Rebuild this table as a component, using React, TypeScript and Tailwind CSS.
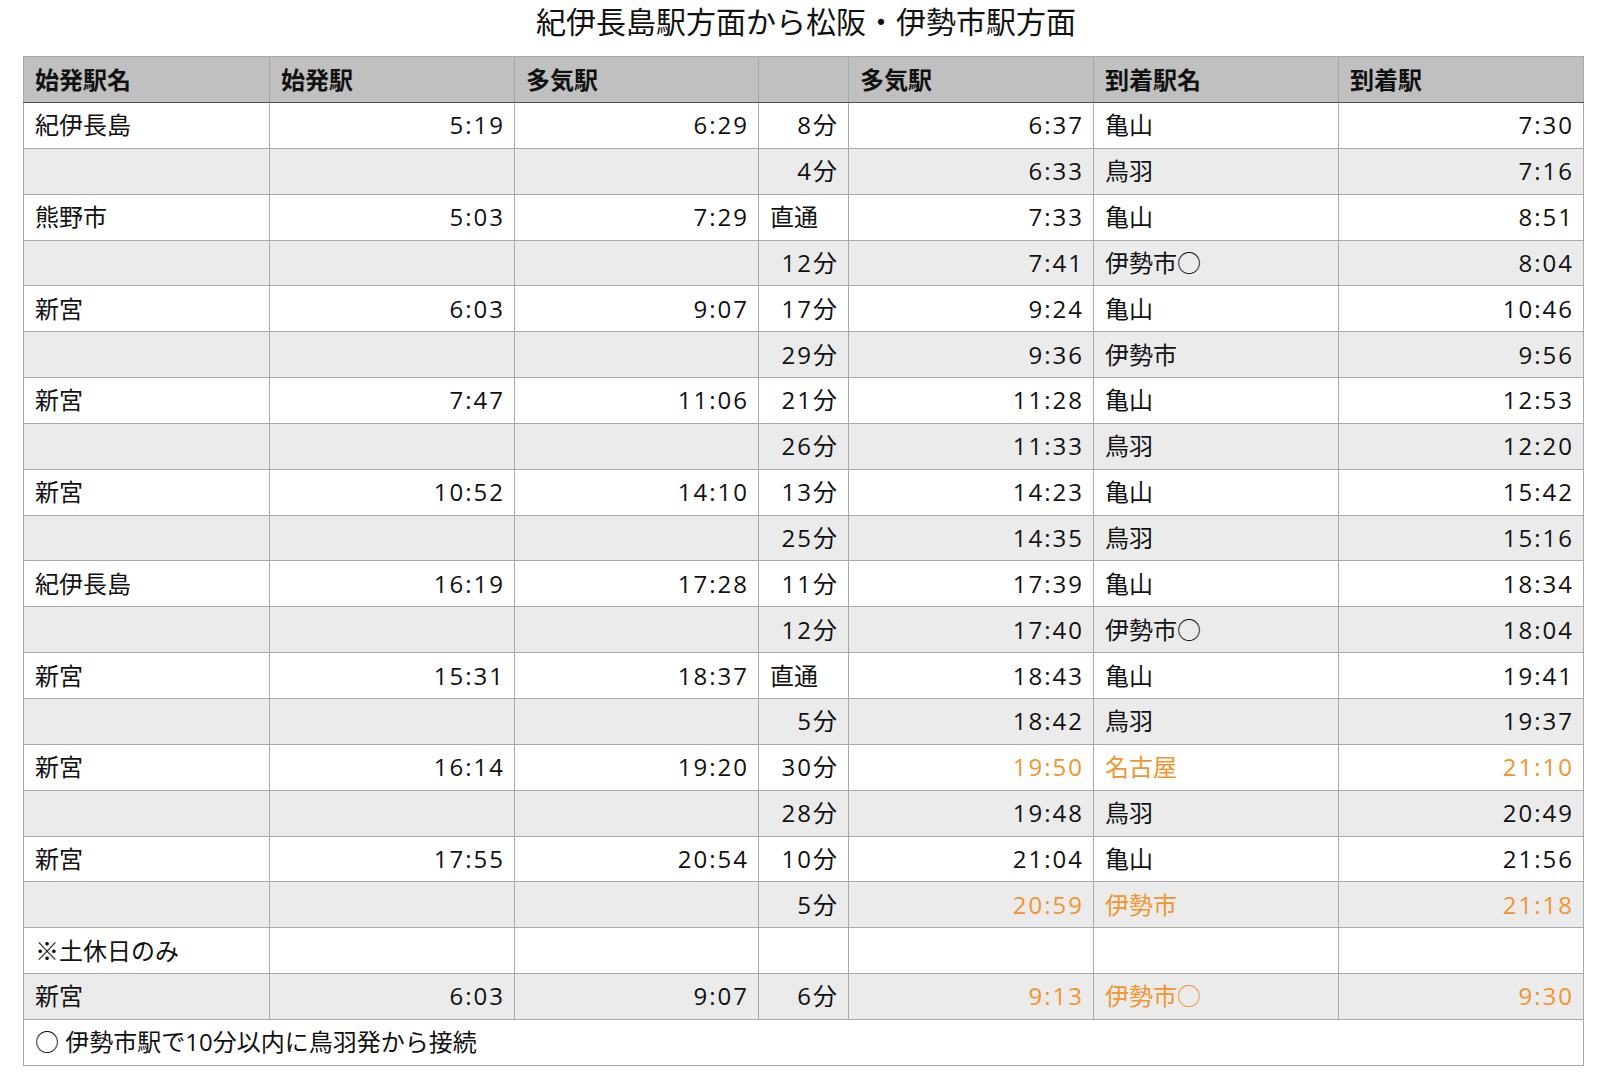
import React from 'react';

type Row = {
  from?: string;
  dep?: string;
  taki?: string;
  wait?: string;
  takiDep?: string;
  to?: string;
  arr?: string;
  orange?: boolean;
  leftWait?: boolean;
};

const rows: Row[] = [
  { from: '紀伊長島', dep: '5:19', taki: '6:29', wait: '8分', takiDep: '6:37', to: '亀山', arr: '7:30' },
  { wait: '4分', takiDep: '6:33', to: '鳥羽', arr: '7:16' },
  { from: '熊野市', dep: '5:03', taki: '7:29', wait: '直通', leftWait: true, takiDep: '7:33', to: '亀山', arr: '8:51' },
  { wait: '12分', takiDep: '7:41', to: '伊勢市○', arr: '8:04' },
  { from: '新宮', dep: '6:03', taki: '9:07', wait: '17分', takiDep: '9:24', to: '亀山', arr: '10:46' },
  { wait: '29分', takiDep: '9:36', to: '伊勢市', arr: '9:56' },
  { from: '新宮', dep: '7:47', taki: '11:06', wait: '21分', takiDep: '11:28', to: '亀山', arr: '12:53' },
  { wait: '26分', takiDep: '11:33', to: '鳥羽', arr: '12:20' },
  { from: '新宮', dep: '10:52', taki: '14:10', wait: '13分', takiDep: '14:23', to: '亀山', arr: '15:42' },
  { wait: '25分', takiDep: '14:35', to: '鳥羽', arr: '15:16' },
  { from: '紀伊長島', dep: '16:19', taki: '17:28', wait: '11分', takiDep: '17:39', to: '亀山', arr: '18:34' },
  { wait: '12分', takiDep: '17:40', to: '伊勢市○', arr: '18:04' },
  { from: '新宮', dep: '15:31', taki: '18:37', wait: '直通', leftWait: true, takiDep: '18:43', to: '亀山', arr: '19:41' },
  { wait: '5分', takiDep: '18:42', to: '鳥羽', arr: '19:37' },
  { from: '新宮', dep: '16:14', taki: '19:20', wait: '30分', takiDep: '19:50', to: '名古屋', arr: '21:10', orange: true },
  { wait: '28分', takiDep: '19:48', to: '鳥羽', arr: '20:49' },
  { from: '新宮', dep: '17:55', taki: '20:54', wait: '10分', takiDep: '21:04', to: '亀山', arr: '21:56' },
  { wait: '5分', takiDep: '20:59', to: '伊勢市', arr: '21:18', orange: true },
  { from: '※土休日のみ' },
  { from: '新宮', dep: '6:03', taki: '9:07', wait: '6分', takiDep: '9:13', to: '伊勢市○', arr: '9:30', orange: true },
];

const headers = ['始発駅名', '始発駅', '多気駅', '', '多気駅', '到着駅名', '到着駅'];

const cell = 'border border-[#a9a9a9] px-[11px] align-middle whitespace-nowrap';
// times are right aligned; the letter spacing widens the digits like the original font
const num = 'text-right tracking-[2px] pr-[9px]';

export default function App() {
  return (
    <div
      className="min-h-screen bg-white text-[#111] pb-4"
      style={{ fontFamily: '"Open Sans", "Noto Sans CJK JP", sans-serif' }}
    >
      <div className="h-[56px] text-center text-[30px] leading-[44px]">
        紀伊長島駅方面から松阪・伊勢市駅方面
      </div>
      <table className="ml-[23px] w-[1560px] table-fixed border-collapse text-[24px] leading-none">
        <colgroup>
          <col className="w-[246px]" />
          <col className="w-[245px]" />
          <col className="w-[244px]" />
          <col className="w-[90px]" />
          <col className="w-[245px]" />
          <col className="w-[245px]" />
          <col className="w-[245px]" />
        </colgroup>
        <thead>
          <tr className="h-[46px] bg-[#c0c0c0]">
            {headers.map((h, i) => (
              <th key={i} className={`${cell} border-b-[#505050] text-left font-bold`}>
                {h}
              </th>
            ))}
          </tr>
        </thead>
        <tbody>
          {rows.map((r, i) => {
            const bg = i % 2 === 1 ? 'bg-[#ebebeb]' : 'bg-white';
            const hl = r.orange ? 'text-[#f0952f]' : '';
            return (
              <tr key={i} className={`h-[45.85px] ${bg}`}>
                <td className={`${cell} text-left`}>{r.from}</td>
                <td className={`${cell} ${num}`}>{r.dep}</td>
                <td className={`${cell} ${num}`}>{r.taki}</td>
                <td className={`${cell} ${r.leftWait ? 'text-left' : num}`}>{r.wait}</td>
                <td className={`${cell} ${num} ${hl}`}>{r.takiDep}</td>
                <td className={`${cell} text-left ${hl}`}>{r.to}</td>
                <td className={`${cell} ${num} ${hl}`}>{r.arr}</td>
              </tr>
            );
          })}
          <tr className="h-[45.85px] bg-white">
            <td colSpan={7} className={`${cell} text-left`}>
              ○ 伊勢市駅で10分以内に鳥羽発から接続
            </td>
          </tr>
        </tbody>
      </table>
    </div>
  );
}
